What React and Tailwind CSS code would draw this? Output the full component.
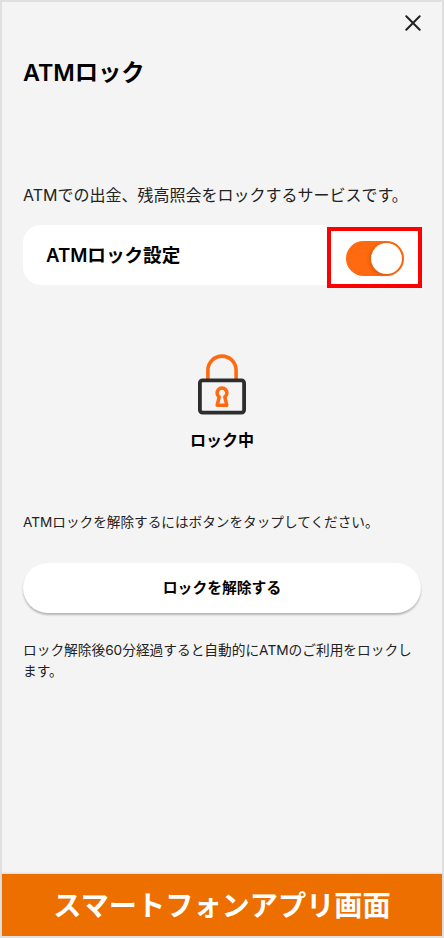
import React, { useState } from 'react';

const LockIcon = () => (
  <svg className="w-[50px] h-[62px]" viewBox="0 0 50 62" fill="none" strokeLinecap="round" strokeLinejoin="round">
    <path d="M10.9 25V16.2a14.1 14.1 0 0 1 28.2 0V25" stroke="#ff690f" strokeWidth="3.6" strokeLinecap="butt" />
    <rect x="2.9" y="26.4" width="44.2" height="32.2" rx="2.6" fill="#f4f4f4" stroke="#2b2d2f" strokeWidth="3.8" />
    <path
      d="M22.2 43a4.9 4.9 0 1 1 5.6 0l2 8.2h-9.6z"
      stroke="#ff690f"
      strokeWidth="3.5"
    />
  </svg>
);

const Toggle = ({ checked, onChange }) => (
  <button
    type="button"
    role="switch"
    aria-checked={checked}
    aria-label="ATMロック設定"
    onClick={() => onChange(!checked)}
    className={`flex items-center w-[58px] h-[35px] rounded-full px-0.5 ${
      checked ? 'justify-end bg-[#ff690f]' : 'justify-start bg-gray-300'
    }`}
  >
    <span className="w-[31px] h-[31px] rounded-full bg-white shadow-[-1px_1px_4px_rgba(0,0,0,0.18)]" />
  </button>
);

const App = () => {
  const [locked, setLocked] = useState(true);

  return (
    <div className="flex flex-col w-[444px] h-[938px] border-2 border-[#e0e0e0] bg-[#f4f4f4] text-black font-[Inter,'Noto_Sans_CJK_JP',sans-serif]">
      <header className="flex justify-end pt-[13px] pr-[21px]">
        <button type="button" aria-label="閉じる">
          <svg className="w-4 h-4" viewBox="0 0 16 16" fill="none" stroke="#222" strokeWidth="2" strokeLinecap="round">
            <path d="M1.3 1.3l13.4 13.4M14.7 1.3L1.3 14.7" />
          </svg>
        </button>
      </header>

      <main className="flex-1 flex flex-col px-[21px]">
        <h1 className="mt-[24px] h-9 leading-9 text-[23.3px] font-semibold whitespace-nowrap">ATMロック</h1>

        <p className="mt-[92px] h-6 leading-6 text-[16px] text-[#222] whitespace-nowrap">
          ATMでの出金、残高照会をロックするサービスです。
        </p>

        <section className="mt-[18px] -mr-px flex h-[62px] items-start">
          <div className="flex-1 flex items-center h-[60px] rounded-l-[18px] bg-white pl-[23px] pt-0.5">
            <span className="text-[18.6px] font-semibold whitespace-nowrap">ATMロック設定</span>
          </div>
          <div className="mt-0.5 flex items-center justify-center w-[95px] h-[61px] border-4 border-[#ff0000] bg-white pt-0.5">
            <Toggle checked={locked} onChange={setLocked} />
          </div>
        </section>

        <div className="mt-[67px] flex flex-col items-center">
          <LockIcon />
          <p className="mt-[12px] h-6 leading-6 text-[16px] font-bold">ロック中</p>
        </div>

        <p className="mt-[60px] h-5 leading-5 text-[13.63px] text-[#222] whitespace-nowrap">
          ATMロックを解除するにはボタンをタップしてください。
        </p>

        <button
          type="button"
          onClick={() => setLocked(false)}
          className="mt-[31px] h-[50px] shrink-0 rounded-full bg-white text-[14.8px] font-bold shadow-[0_2px_2px_rgba(0,0,0,0.25)]"
        >
          ロックを解除する
        </button>

        <p className="mt-[27px] leading-[21px] text-[13.7px] text-[#222] whitespace-nowrap">
          ロック解除後60分経過すると自動的にATMのご利用をロックし
          <br />
          ます。
        </p>
      </main>

      <footer className="flex items-center justify-center h-[62px] pt-0.5 bg-[#ec6f00] text-white text-[28.2px] font-bold whitespace-nowrap shadow-[0_-1px_2px_rgba(0,0,0,0.1)]">
        スマートフォンアプリ画面
      </footer>
    </div>
  );
};

export default App;
